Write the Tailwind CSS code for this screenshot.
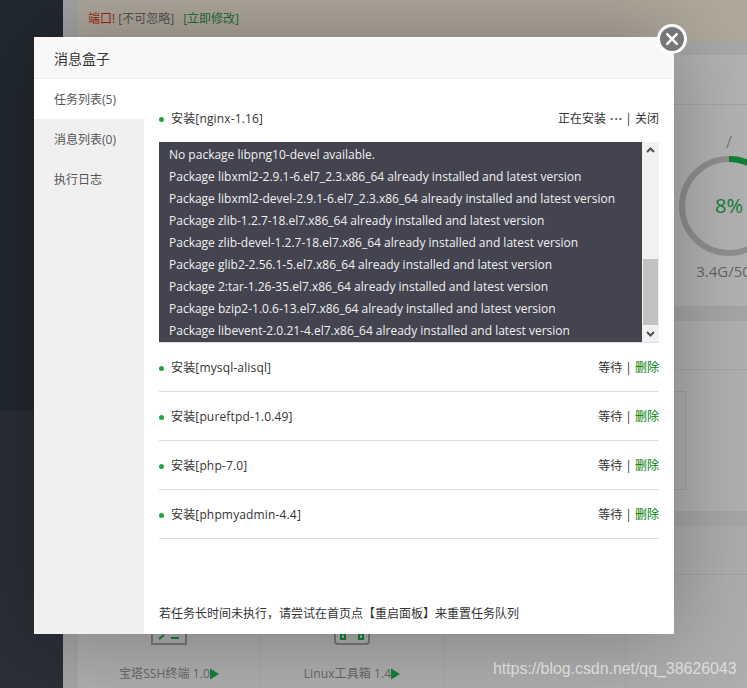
<!DOCTYPE html>
<html lang="zh">
<head>
<meta charset="utf-8">
<script src="https://cdn.jsdelivr.net/npm/@tailwindcss/browser@4"></script>
</head>
<body class="overflow-hidden">
<div class="relative flex h-[688px] w-[747px] overflow-hidden bg-[#a8a8a8] font-['Open_Sans','Noto_Sans_CJK_SC',sans-serif] text-[12px] text-[#555]">
  <!-- sidebar -->
  <div class="flex w-[63px] shrink-0 flex-col">
    <div class="h-[411px] bg-[#22292f]"></div>
    <div class="flex-1 bg-[#2a2f38]"></div>
  </div>
  <!-- page behind the dialog -->
  <div class="flex flex-1 flex-col bg-[#a4a4a4] pl-[15px]">
    <div class="flex h-[41px] shrink-0 items-center gap-[9px] bg-[#b0a89b] pb-[3px] pl-[10px]">
      <span><span class="text-[#a11f10]">端口!</span> [不可忽略]</span>
      <span class="text-[#1b7038]">[立即修改]</span>
    </div>
    <div class="h-[14px] shrink-0 bg-[#a8a8a8]"></div>
    <div class="h-[251px] shrink-0 overflow-hidden bg-[#b2b2b2]">
      <div class="h-[50px] border-b border-[#a4a4a4]"></div>
      <div class="ml-[601px] flex w-[100px] flex-col items-center pt-[29px]">
        <span class="text-[16px] leading-[16px] text-[#777]">/</span>
        <div class="relative mt-[6px] h-[100px] w-[100px] shrink-0">
          <svg viewBox="0 0 100 100" class="h-[100px] w-[100px]"><circle cx="50" cy="50" r="47" fill="none" stroke="#8f8f8f" stroke-width="6"/><path d="M50 3A47 47 0 0 1 72.6 8.8" fill="none" stroke="#0f8136" stroke-width="6"/></svg>
          <span class="absolute inset-0 flex items-center justify-center text-[20px] text-[#0f8136]">8%</span>
        </div>
        <span class="mt-[6px] text-[15px] leading-[18px] whitespace-nowrap text-[#666]">3.4G/50G</span>
      </div>
    </div>
    <div class="h-[15px] shrink-0 bg-[#a6a6a6]"></div>
    <div class="h-[190px] shrink-0 bg-[#b0b0b0]">
      <div class="h-[49px] border-b border-[#a4a4a4]"></div>
      <div class="mt-[21px] h-[99px] w-[608px] border border-[#a0a0a0]"></div>
    </div>
    <div class="h-[15px] shrink-0 bg-[#a6a6a6]"></div>
    <div class="flex flex-1 flex-col bg-[#adadad]">
      <div class="h-[49px] shrink-0 border-b border-[#a2a2a2]"></div>
      <div class="flex flex-1">
        <div class="flex w-[183px] flex-col items-center border-r border-[#a3a3ad] pt-[34px]">
          <svg viewBox="0 0 36 36" class="h-[36px] w-[36px]" fill="none"><rect x="1" y="1" width="34" height="34" stroke="#777" stroke-width="2"/><path d="M8 30l5-4" stroke="#0f8136" stroke-width="2"/><path d="M20 29h8" stroke="#0f8136" stroke-width="2"/></svg>
          <span class="mt-[20px] flex items-center leading-[18px] tracking-[0.1px] text-[#666]">宝塔SSH终端 1.0<svg viewBox="0 0 10 12" class="h-[12px] w-[9px]"><path d="M0 0l10 6-10 6z" fill="#0f8136"/></svg></span>
        </div>
        <div class="flex w-[183px] flex-col items-center border-r border-[#a3a3ad] pt-[34px]">
          <svg viewBox="0 0 36 36" class="h-[36px] w-[36px]" fill="none"><rect x="1" y="1" width="34" height="34" rx="3" stroke="#777" stroke-width="2"/><path d="M7 25h4v5H7zM25 25h4v5h-4z" stroke="#0f8136" stroke-width="2"/></svg>
          <span class="mt-[20px] flex items-center leading-[18px] tracking-[0.1px] text-[#666]">Linux工具箱 1.4<svg viewBox="0 0 10 12" class="h-[12px] w-[9px]"><path d="M0 0l10 6-10 6z" fill="#0f8136"/></svg></span>
        </div>
        <div class="w-[182px] border-r border-[#a3a3ad]"></div>
      </div>
    </div>
  </div>

  <!-- dialog -->
  <div class="absolute top-[37px] left-[34px] flex h-[597px] w-[640px] flex-col bg-white text-[#333] shadow-[0_0_80px_rgba(0,0,0,0.3)]">
    <div class="flex h-[42px] shrink-0 items-center border-b border-[#eeeeee] bg-[#f8f8f8] pt-[2px] pl-[20px] text-[14px]">消息盒子</div>
    <div class="flex min-h-0 flex-1">
      <div class="w-[110px] shrink-0 bg-[#f0f0f0] text-[#555]">
        <div class="flex h-[40px] items-center bg-white pt-[2px] pl-[20px]">任务列表(5)</div>
        <div class="flex h-[40px] items-center pt-[2px] pl-[20px]">消息列表(0)</div>
        <div class="flex h-[40px] items-center pt-[2px] pl-[20px]">执行日志</div>
      </div>
      <div class="flex flex-1 flex-col px-[15px]">
        <div class="flex h-[63px] shrink-0 items-center justify-between pt-[17px]">
          <span class="flex items-center tracking-[0.15px]"><span class="mr-[7px] h-[5px] w-[5px] rounded-full bg-[#20a53a]"></span>安装[nginx-1.16]</span>
          <span class="flex items-center">正在安装<b class="mr-[2px] ml-[4px] font-bold tracking-[1px] text-[#555]">···</b>| 关闭</span>
        </div>
        <div class="flex h-[201px] shrink-0 border-b border-[#ddddea]">
          <div class="flex-1 overflow-hidden bg-[#444451] pl-[10px] leading-[22px] whitespace-nowrap text-[#f0f0f0]">
            <div class="h-[2px]"></div>
            <div>No package libpng10-devel available.</div>
            <div>Package libxml2-2.9.1-6.el7_2.3.x86_64 already installed and latest version</div>
            <div>Package libxml2-devel-2.9.1-6.el7_2.3.x86_64 already installed and latest version</div>
            <div>Package zlib-1.2.7-18.el7.x86_64 already installed and latest version</div>
            <div>Package zlib-devel-1.2.7-18.el7.x86_64 already installed and latest version</div>
            <div>Package glib2-2.56.1-5.el7.x86_64 already installed and latest version</div>
            <div>Package 2:tar-1.26-35.el7.x86_64 already installed and latest version</div>
            <div>Package bzip2-1.0.6-13.el7.x86_64 already installed and latest version</div>
            <div>Package libevent-2.0.21-4.el7.x86_64 already installed and latest version</div>
          </div>
          <div class="flex w-[17px] shrink-0 flex-col items-center bg-[#f1f1f1]">
            <svg viewBox="0 0 17 17" class="h-[17px] w-[17px] shrink-0"><path d="M5 10l3.5-3.5L12 10" fill="none" stroke="#505050" stroke-width="2"/></svg>
            <div class="mt-[100px] h-[66px] w-[15px] shrink-0 bg-[#c1c1c1]"></div>
            <svg viewBox="0 0 17 17" class="mt-auto h-[17px] w-[17px] shrink-0"><path d="M5 7l3.5 3.5L12 7" fill="none" stroke="#505050" stroke-width="2"/></svg>
          </div>
        </div>
        <div class="flex h-[49px] shrink-0 items-center justify-between border-b border-[#ddddea] pt-[2px]">
          <span class="flex items-center tracking-[0.15px]"><span class="mr-[7px] h-[5px] w-[5px] rounded-full bg-[#20a53a]"></span>安装[mysql-alisql]</span>
          <span>等待 | <span class="text-[#008000]">删除</span></span>
        </div>
        <div class="flex h-[49px] shrink-0 items-center justify-between border-b border-[#ddddea] pt-[2px]">
          <span class="flex items-center tracking-[0.15px]"><span class="mr-[7px] h-[5px] w-[5px] rounded-full bg-[#20a53a]"></span>安装[pureftpd-1.0.49]</span>
          <span>等待 | <span class="text-[#008000]">删除</span></span>
        </div>
        <div class="flex h-[49px] shrink-0 items-center justify-between border-b border-[#ddddea] pt-[2px]">
          <span class="flex items-center tracking-[0.15px]"><span class="mr-[7px] h-[5px] w-[5px] rounded-full bg-[#20a53a]"></span>安装[php-7.0]</span>
          <span>等待 | <span class="text-[#008000]">删除</span></span>
        </div>
        <div class="flex h-[49px] shrink-0 items-center justify-between border-b border-[#ddddea] pt-[2px]">
          <span class="flex items-center tracking-[0.15px]"><span class="mr-[7px] h-[5px] w-[5px] rounded-full bg-[#20a53a]"></span>安装[phpmyadmin-4.4]</span>
          <span>等待 | <span class="text-[#008000]">删除</span></span>
        </div>
        <div class="mt-auto pb-[11px] leading-[18px]">若任务长时间未执行，请尝试在首页点【重启面板】来重置任务队列</div>
      </div>
    </div>
  </div>

  <!-- close button -->
  <div class="absolute top-[24px] left-[657px] flex h-[30px] w-[30px] items-center justify-center rounded-full border-[3px] border-white bg-[#777777]">
    <svg viewBox="0 0 12 12" class="h-[12px] w-[12px]"><path d="M1.2 1.2l9.6 9.6M10.8 1.2l-9.6 9.6" stroke="#fff" stroke-width="2.4" stroke-linecap="round"/></svg>
  </div>

  <!-- watermark -->
  <div class="absolute top-[659px] left-[493px] font-['Liberation_Sans',sans-serif] text-[16px] leading-[20px] tracking-[-0.06px] whitespace-nowrap text-white/60">https://blog.csdn.net/qq_38626043</div>
</div>
</body>
</html>
